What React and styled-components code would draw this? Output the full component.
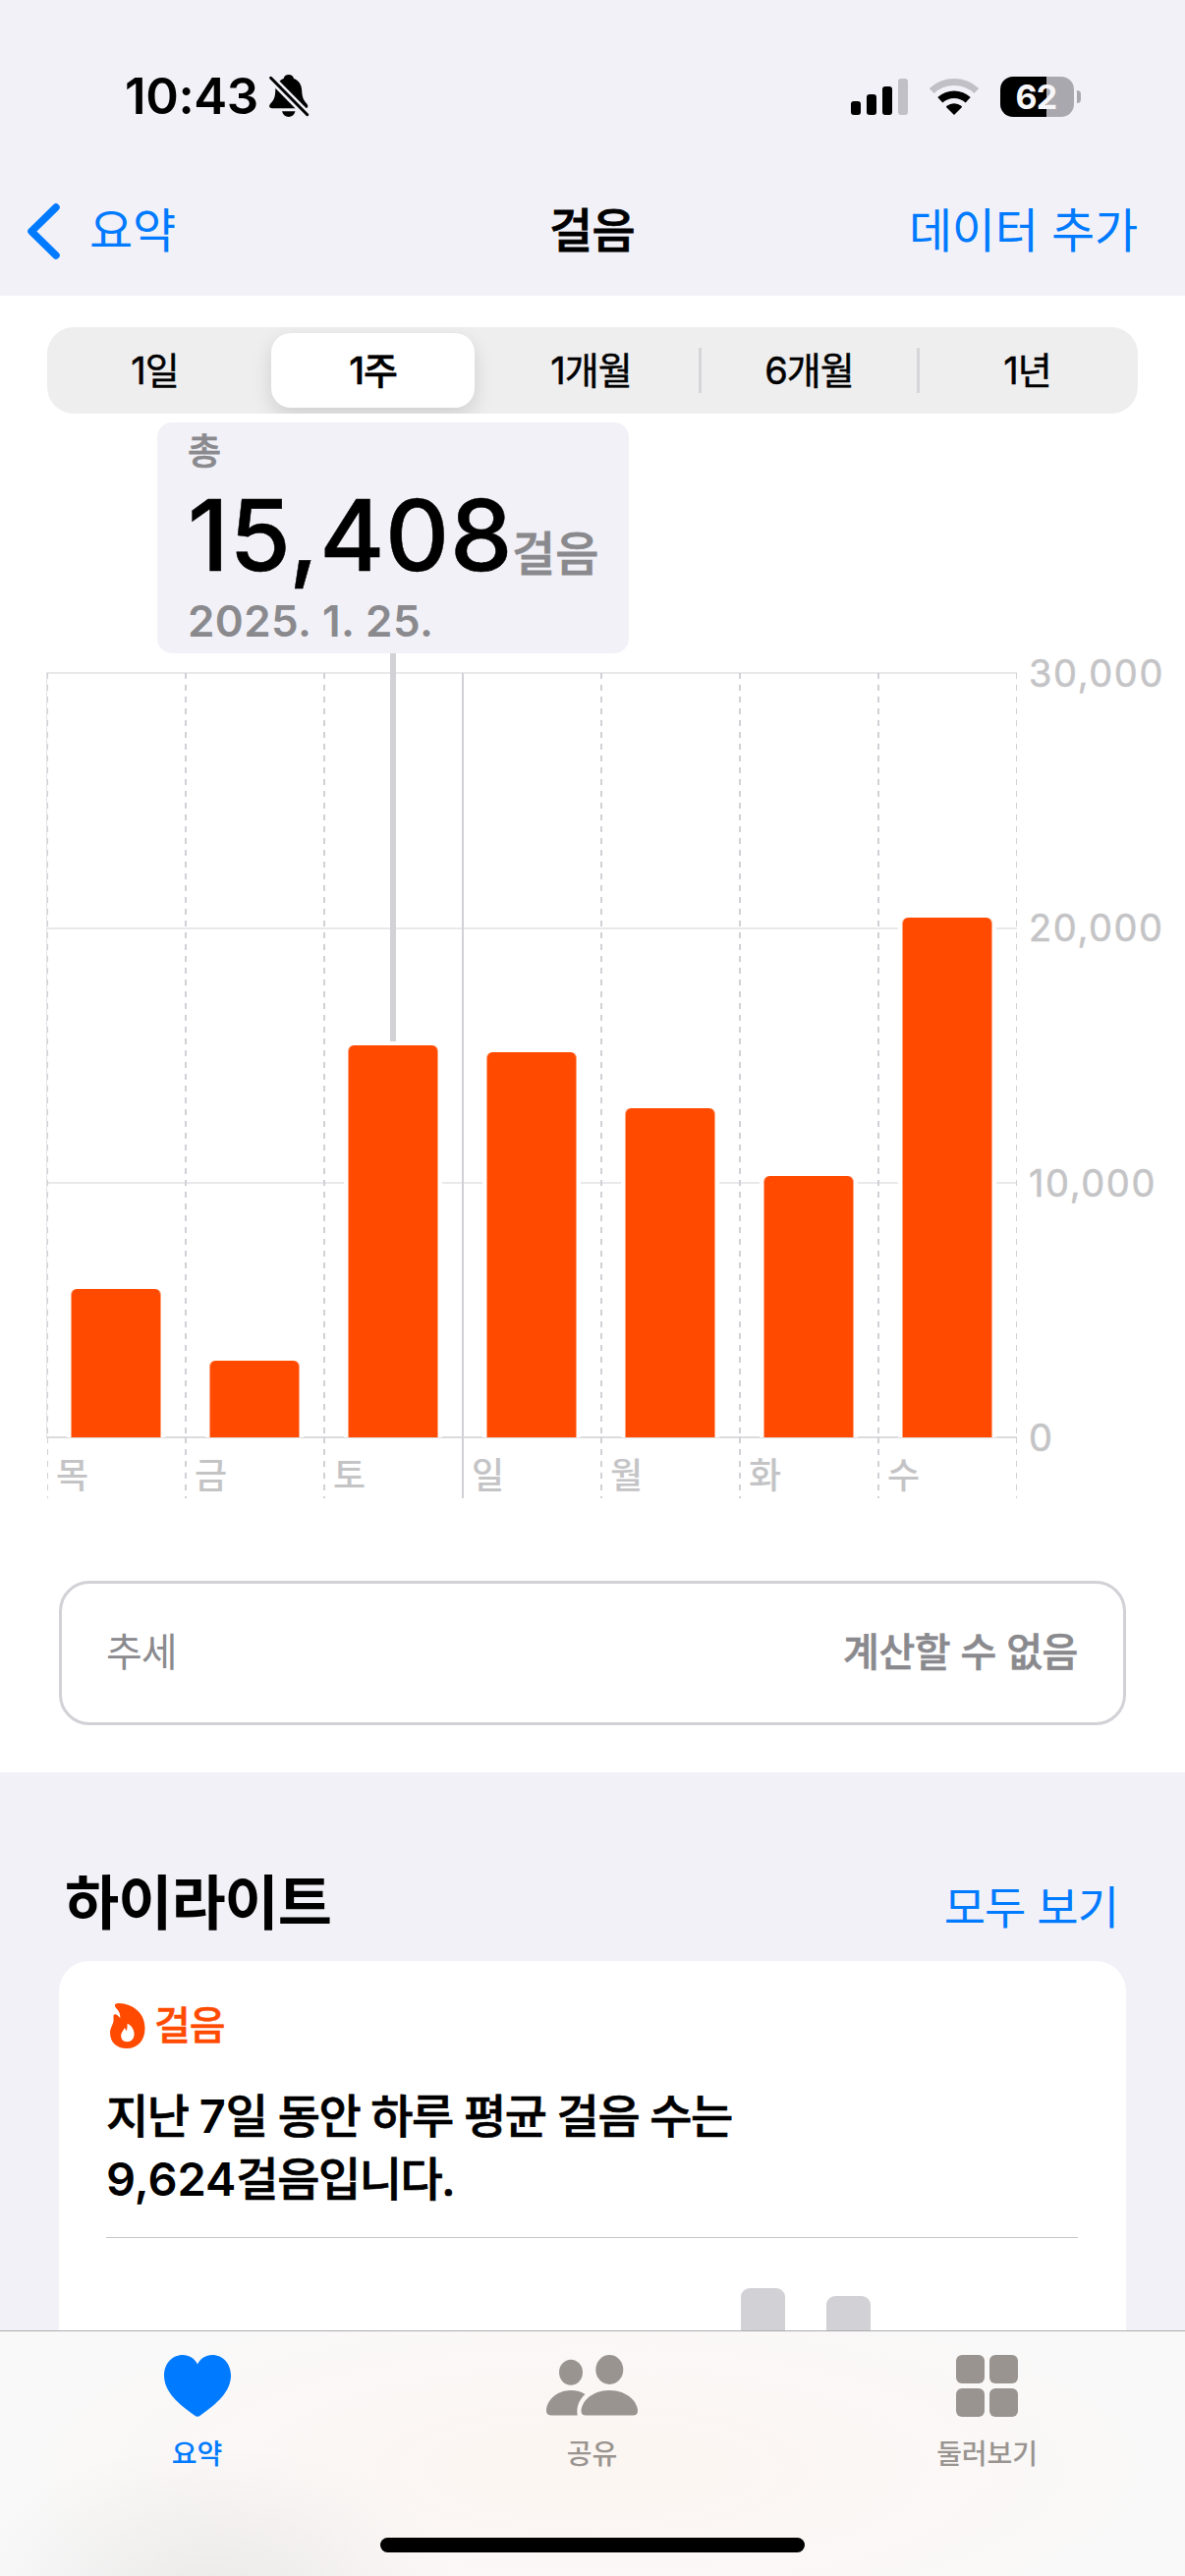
import { useState } from "react"
import styled, { createGlobalStyle } from "styled-components";

const GlobalStyle=createGlobalStyle`
* {
  box-sizing: border-box;
}
body {
  margin: 0;
  background-color: #f2f1f7;
}
button {
  border: none;
  padding: 0;
  background: none;
  font: inherit;
  color: inherit;
}
`
const Main=styled.div`
  display: flex;
  flex-direction: column;
  width: 1206px;
  height: 2622px;
  overflow: hidden;
  background-color: #f2f1f7;
  color: #000;
  font-family: "Inter", "Noto Sans CJK KR", sans-serif;
  white-space: nowrap;
`
const Scroll=styled.div`
  flex: 1;
  min-height: 0;
  overflow: hidden;
`

/* status bar */
const StatusBar=styled.div`
  display: flex;
  justify-content: space-between;
  height: 168px;
  padding: 72px 106px 0 127px;
`
const StatusGroup=styled.div`
  display: flex;
  align-items: center;
  height: 52px;
`
const Clock=styled.span`
  width: 147px;
  font-size: 51px;
  font-weight: 600;
  line-height: 52px;
  letter-spacing: -0.4px;
`
const Signal=styled.div`
  display: flex;
  align-items: flex-end;
  gap: 6px;
  height: 37px;
  margin-right: 22px;
`
const SignalBar=styled.i`
  width: 10px;
  height: ${(p)=>p.$height}px;
  border-radius: 3px;
  background-color: ${(p)=>(p.$off ? "#c1c0c6" : "#000")};
`
const Battery=styled.div`
  display: flex;
  align-items: center;
  justify-content: center;
  width: 75px;
  height: 41px;
  margin-left: 22px;
  padding-right: 2px;
  border-radius: 13px;
  background: linear-gradient(90deg, #000 47px, #a9a8ae 47px);
  color: #f7f7fa;
  font-size: 34px;
  font-weight: 700;
  letter-spacing: -0.8px;
`
const BatteryCap=styled.i`
  width: 4px;
  height: 13px;
  margin-left: 3px;
  border-radius: 0 6px 6px 0;
  background-color: #a9a8ae;
`

/* navigation */
const NavBar=styled.div`
  display: grid;
  grid-template-columns: 1fr auto 1fr;
  align-items: center;
  height: 133px;
  padding: 0 48px 0 27px;
  font-size: 48px;
  line-height: 56px;
`
const NavLink=styled.button`
  display: flex;
  align-items: center;
  gap: 28px;
  justify-self: ${(p)=>p.$side};
  color: #007aff;
  letter-spacing: -0.2px;
`
const NavTitle=styled.h1`
  margin: 0 0 0 20px;
  font-size: 48px;
  font-weight: 500;
  letter-spacing: -0.6px;
  -webkit-text-stroke: 0.8px;
`

/* chart */
const Panel=styled.section`
  height: 1503px;
  padding-top: 32px;
  background-color: #fff;
`
const Segments=styled.div`
  display: grid;
  grid-template-columns: repeat(5, 1fr);
  height: 88px;
  margin: 0 48px 263px;
  border-radius: 27px;
  background-color: #eeeeef;
  overflow: hidden;
`
const SegmentCell=styled.div`
  padding: 6px 9px 6px 6px;
  background: ${(p)=>(p.$line ? "linear-gradient(#d6d6d8, #d6d6d8) right 0 top 21px / 3px 46px no-repeat" : "none")};
`
const Segment=styled.button`
  display: flex;
  align-items: center;
  justify-content: center;
  width: 100%;
  height: 100%;
  padding-bottom: 5px;
  border-radius: 20px;
  font-size: 38px;
  font-weight: ${(p)=>(p.$active ? 500 : 400)};
  letter-spacing: -1px;
  background-color: ${(p)=>(p.$active ? "#fff" : "transparent")};
  box-shadow: ${(p)=>(p.$active ? "0 8px 20px rgba(0, 0, 0, 0.13)" : "none")};
  -webkit-text-stroke: 0.5px;
`
const Chart=styled.div`
  position: relative;
  display: flex;
  height: 841px;
  margin-left: 47px;
`
const Plot=styled.div`
  display: grid;
  grid-template-columns: repeat(7, 141px) 1px;
  padding-top: 1px;
  background:
    linear-gradient(#e9e9eb, #e9e9eb) 0 0 / 100% 2px no-repeat,
    linear-gradient(#e9e9eb, #e9e9eb) 0 260px / 100% 2px no-repeat,
    linear-gradient(#e9e9eb, #e9e9eb) 0 519px / 100% 2px no-repeat,
    linear-gradient(#dcdcdf, #dcdcdf) 0 778px / 100% 2px no-repeat;
`
const dashes="repeating-linear-gradient(#d1d1d6 0 6px, transparent 6px 12px)";
const rules={
  edge: `linear-gradient(#e3e3e7, #e3e3e7) 0 0 / 1px 100% no-repeat, ${dashes} 1px 0 / 1px 100% no-repeat`,
  edgeLabel: `${dashes} 1px 0 / 1px 100% no-repeat`,
  solid: "linear-gradient(#d1d1d6, #d1d1d6) 0 0 / 2px 100% no-repeat",
  dashed: `${dashes} 0 0 / 2px 100% no-repeat`,
}
const Slot=styled.div`
  display: flex;
  align-items: flex-end;
  height: 778px;
  padding-left: 25px;
  overflow: hidden;
  background: ${(p)=>rules[p.$rule]};
`
const LastLine=styled.div`
  overflow: hidden;
`
const Bar=styled.div`
  width: 92px;
  border: solid #ffa680;
  border-width: 0 1px;
  border-radius: 6px 6px 0 0;
  background-color: #ff4a00;
  box-shadow: 0 0 0 4px #fff;
`
const Day=styled.div`
  height: 62px;
  padding-left: 10px;
  font-size: 36px;
  font-weight: 500;
  line-height: 79px;
  color: #c4c4c6;
  background: ${(p)=>rules[p.$rule]};
`
const Axis=styled.div`
  display: flex;
  flex-direction: column;
  justify-content: space-between;
  height: 836px;
  margin: -28px 0 0 12px;
  font-size: 38px;
  font-weight: 400;
  line-height: 58px;
  letter-spacing: 1.6px;
  color: #c4c4c6;
  -webkit-text-stroke: 0.5px;
`
const Callout=styled.div`
  position: absolute;
  left: 113px;
  top: -254px;
  width: 480px;
  height: 235px;
  padding: 7px 0 0 31px;
  border-radius: 15px;
  background-color: #f2f1f7;
  color: #8a8a8e;
  font-weight: 500;

  &::after {
    content: "";
    position: absolute;
    left: 237px;
    top: 100%;
    width: 6px;
    height: 395px;
    background-color: #d1d1d6;
  }
`
const CalloutLabel=styled.div`
  font-size: 37px;
  line-height: 45px;
  -webkit-text-stroke: 0.7px;
`
const CalloutValue=styled.div`
  display: flex;
  align-items: baseline;
  height: 125px;
  font-size: 48px;
  line-height: 122px;
  -webkit-text-stroke: 0.8px;

  b {
    width: 330px;
    color: #000;
    font-size: 101px;
    font-weight: 500;
    line-height: 125px;
    letter-spacing: 0.6px;
    -webkit-text-stroke: 0.5px;
  }
`
const CalloutUnit=styled.span`
  margin-bottom: 2px;
`
const CalloutDate=styled.div`
  font-size: 44px;
  font-weight: 600;
  line-height: 50px;
  letter-spacing: 0.4px;
`
const Trend=styled.div`
  display: flex;
  align-items: center;
  justify-content: space-between;
  height: 147px;
  margin: 84px 60px 0;
  padding: 0 46px 8px 45px;
  border: 3px solid #d1d1d6;
  border-radius: 31px;
  color: #8a8a8e;
  font-size: 40px;
  letter-spacing: -1px;

  strong {
    font-weight: 500;
    letter-spacing: -0.4px;
    -webkit-text-stroke: 0.6px;
  }
`

/* highlights */
const SectionHead=styled.div`
  display: flex;
  justify-content: space-between;
  align-items: center;
  height: 192px;
  padding: 81px 68px 0 66px;
`
const SectionTitle=styled.h2`
  margin: 0 0 8px;
  font-size: 60px;
  font-weight: 700;
  line-height: 70px;
  letter-spacing: -1px;
`
const MoreLink=styled.button`
  color: #007aff;
  font-size: 46px;
  line-height: 56px;
  letter-spacing: -1px;
`
const Card=styled.div`
  height: 600px;
  margin: 0 60px;
  padding: 43px 49px 0 48px;
  border-radius: 31px;
  background-color: #fff;
`
const CardTag=styled.div`
  display: flex;
  align-items: center;
  gap: 9px;
  height: 46px;
  padding-left: 4px;
  color: #ff4a00;
  font-size: 40px;
  font-weight: 500;
  line-height: 44px;
  letter-spacing: -1px;
  -webkit-text-stroke: 0.5px;
`
const CardText=styled.p`
  margin: 0;
  padding: 37px 0 27px;
  font-size: 47px;
  font-weight: 500;
  line-height: 64px;
  letter-spacing: -1.45px;
  -webkit-text-stroke: 0.7px;
`
const Num=styled.span`
  font-weight: 600;
  letter-spacing: 0;
  -webkit-text-stroke: 0;
`
const MiniChart=styled.div`
  display: flex;
  align-items: flex-start;
  gap: 42px;
  padding: 51px 0 0 646px;
  border-top: 1px solid #c6c6c8;
`
const MiniBar=styled.div`
  width: 45px;
  height: 240px;
  margin-top: ${(p)=>p.$drop}px;
  border-radius: 9px;
  background-color: #d1d1d6;
`

/* tab bar */
const TabBar=styled.nav`
  flex: none;
  height: 250px;
  border-top: 1px solid #adadb0;
  background:
    radial-gradient(ellipse 250px 160px at 215px 275px, rgba(228, 227, 226, 0.7), transparent),
    radial-gradient(ellipse 620px 190px at 600px 140px, #fcf6f3 20%, transparent),
    #f9f9f9;
`
const Tabs=styled.div`
  display: grid;
  grid-template-columns: repeat(3, 1fr);
  height: 210px;
`
const Tab=styled.button`
  display: flex;
  flex-direction: column;
  align-items: center;
  padding: 24px 1px 0 0;
  color: ${(p)=>(p.$active ? "#007aff" : "#999490")};
  font-size: 28px;
  font-weight: 500;
  line-height: 42px;
  letter-spacing: -0.1px;

  svg {
    height: 64px;
    margin-bottom: 16px;
  }
`
const HomeIndicator=styled.div`
  width: 432px;
  height: 15px;
  margin: 0 auto;
  border-radius: 8px;
  background-color: #000;
`

const periods=["1일", "1주", "1개월", "6개월", "1년"];

// height is in px, 259.5px for every 10,000 steps
const days=[
  { name: "목", height: 151, rule: "edge", labelRule: "edgeLabel" },
  { name: "금", height: 78, rule: "dashed" },
  { name: "토", height: 399, rule: "dashed" },
  { name: "일", height: 392, rule: "solid" },
  { name: "월", height: 335, rule: "dashed" },
  { name: "화", height: 266, rule: "dashed" },
  { name: "수", height: 529, rule: "dashed" },
];

const BellOff=()=>(
  <svg width="41" height="44" viewBox="0 0 41 44">
    <path d="M19.7 0C22.5 0 24.5 1.6 25 4C30.5 6 33 10.5 33.2 16.500C33.500 24 35.500 26.500 38.200 29.500C40.500 32.500 38.800 34.300 36.500 34.300H3C.3 34.300-1 32.300 1.200 29.500C4.500 26 6 23.500 6.200 16.500C6.500 10.500 9.500 6 14.700 4C15.200 1.600 17 0 19.700 0Z" fill="#000"/>
    <path d="M13 37.300H26.500C25.600 41 23 43 19.700 43C16.500 43 14 41 13 37.300Z" fill="#000"/>
    <path d="M0 1.700L41 43.300" stroke="#f2f1f7" strokeWidth="8"/>
    <path d="M1.600 3.300L38.700 40.700" stroke="#000" strokeWidth="3" strokeLinecap="round"/>
  </svg>
)
const Wifi=()=>(
  <svg width="50" height="37" viewBox="0 0 50 37" fill="none">
    <path d="M2.200 12.500A33.500 33.500 0 0 1 47.800 12.500" stroke="#c1c0c6" strokeWidth="7"/>
    <path d="M10.800 21.800A20.800 20.800 0 0 1 39.200 21.800" stroke="#000" strokeWidth="7.500"/>
    <path d="M25 37L17.200 29.200Q16.600 28.400 17.600 27.700A12 12 0 0 1 32.400 27.700Q33.400 28.400 32.800 29.200Z" fill="#000"/>
  </svg>
)
const Chevron=()=>(
  <svg width="36" height="58" viewBox="0 0 36 58">
    <path d="M30 5L5 29.500L30 54" fill="none" stroke="#007aff" strokeWidth="7.500" strokeLinecap="round" strokeLinejoin="round"/>
  </svg>
)
const Flame=()=>(
  <svg width="36" height="46" viewBox="0 0 36 46">
    <path fillRule="evenodd" fill="#ff4a00" d="M5 3C4.300 1 6 0 9 0C23 .5 35.500 9.500 35.500 25.500C35.500 38 28 46 17 46C7 46 0 40 0 30C0 24.500 3.800 21.500 3.600 16.500C3.500 14.500 3.200 12.500 4.200 11.600C6 10.500 8.500 13 10.300 15.300C10.600 10 8.500 7 6 4.700ZM17.700 20.700C17.300 23 17.900 25.500 16.600 28.500C16.300 27 15.600 25.700 14.300 25.300C14.200 27.700 11.200 29.500 11.200 33C11.200 36.800 13.500 39.200 17.300 39.200C21.800 39.200 24.600 36 24.600 31.500C24.600 26.700 21.600 22.300 17.700 20.700Z"/>
  </svg>
)
const Heart=()=>(
  <svg width="68" height="64" viewBox="0 0 68 64">
    <path fill="#007aff" d="M34 9.500C31 3.500 25.500 0 19 0C8 0 0 9 0 21C0 37 14.500 50 31 61.500Q34 64 37 61.500C53.500 50 68 37 68 21C68 9 60 0 49 0C42.500 0 37 3.500 34 9.500Z"/>
  </svg>
)
const People=()=>(
  <svg width="93" height="64" viewBox="0 0 93 64" fill="#999490">
    <ellipse cx="25" cy="17.700" rx="12" ry="13"/>
    <ellipse cx="64.300" cy="15" rx="14" ry="15"/>
    <path d="M25 36C31 36 35.500 37.300 39.500 40C34 45 30.300 52 31.700 61.500H5.500C2 61.500 0 60 0 57C0 47 10 36 25 36Z"/>
    <path d="M64.300 36C83 36 93 48.500 93 57C93 60 91.500 61.500 88 61.500H40.500C37 61.500 35.500 60 35.500 57C35.500 48.500 45.500 36 64.300 36Z"/>
  </svg>
)
const Squares=()=>(
  <svg width="63" height="64" viewBox="0 0 63 64" fill="#999490">
    <rect x="0" y="0" width="29" height="29" rx="6"/>
    <rect x="34" y="0" width="29" height="29" rx="6"/>
    <rect x="0" y="34" width="29" height="29" rx="6"/>
    <rect x="34" y="34" width="29" height="29" rx="6"/>
  </svg>
)

function App() {
  const [period,setPeriod]=useState("1주");

  return (
  <>
    <GlobalStyle/>
    <Main>
      <StatusBar>
        <StatusGroup>
          <Clock>10:43</Clock>
          <BellOff/>
        </StatusGroup>
        <StatusGroup>
          <Signal>
            <SignalBar $height={14}/>
            <SignalBar $height={21}/>
            <SignalBar $height={29}/>
            <SignalBar $height={37} $off/>
          </Signal>
          <Wifi/>
          <Battery>62</Battery>
          <BatteryCap/>
        </StatusGroup>
      </StatusBar>

      <NavBar>
        <NavLink $side="start"><Chevron/>요약</NavLink>
        <NavTitle>걸음</NavTitle>
        <NavLink $side="end">데이터 추가</NavLink>
      </NavBar>

      <Scroll>
        <Panel>
          <Segments>
            {periods.map((name,i)=>(
              <SegmentCell key={name} $line={i===2 || i===3}>
                <Segment $active={name===period} onClick={()=>setPeriod(name)}>{name}</Segment>
              </SegmentCell>
            ))}
          </Segments>

          <Chart>
            <Plot>
              {days.map((day)=>(
                <div key={day.name}>
                  <Slot $rule={day.rule}>
                    <Bar style={{height:day.height}}/>
                  </Slot>
                  <Day $rule={day.labelRule || day.rule}>{day.name}</Day>
                </div>
              ))}
              <LastLine>
                <Slot $rule="dashed"/>
                <Day $rule="dashed"/>
              </LastLine>
            </Plot>
            <Axis>
              <span>30,000</span>
              <span>20,000</span>
              <span>10,000</span>
              <span>0</span>
            </Axis>
            <Callout>
              <CalloutLabel>총</CalloutLabel>
              <CalloutValue><b>15,408</b><CalloutUnit>걸음</CalloutUnit></CalloutValue>
              <CalloutDate>2025. 1. 25.</CalloutDate>
            </Callout>
          </Chart>

          <Trend>
            <span>추세</span>
            <strong>계산할 수 없음</strong>
          </Trend>
        </Panel>

        <SectionHead>
          <SectionTitle>하이라이트</SectionTitle>
          <MoreLink>모두 보기</MoreLink>
        </SectionHead>
        <Card>
          <CardTag><Flame/>걸음</CardTag>
          <CardText>지난 <Num>7</Num>일 동안 하루 평균 걸음 수는<br/><Num>9,624</Num>걸음입니다.</CardText>
          <MiniChart>
            <MiniBar $drop={0}/>
            <MiniBar $drop={8}/>
          </MiniChart>
        </Card>
      </Scroll>

      <TabBar>
        <Tabs>
          <Tab $active><Heart/>요약</Tab>
          <Tab><People/>공유</Tab>
          <Tab><Squares/>둘러보기</Tab>
        </Tabs>
        <HomeIndicator/>
      </TabBar>
    </Main>
  </>
  );
}

export default App;
